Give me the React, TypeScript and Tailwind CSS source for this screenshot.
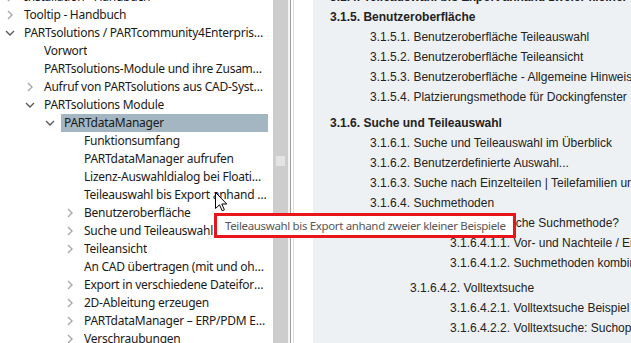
import React from "react";

type TreeRow = {
  label: string;
  level: 0 | 1 | 2 | 3;
  chevron?: "right" | "down";
  selected?: boolean;
};

const TREE: TreeRow[] = [
  { label: "Installation - Handbuch", level: 0, chevron: "right" },
  { label: "Tooltip - Handbuch", level: 0, chevron: "right" },
  { label: "PARTsolutions / PARTcommunity4Enterprise - Handbuch", level: 0, chevron: "down" },
  { label: "Vorwort", level: 1 },
  { label: "PARTsolutions-Module und ihre Zusammenhänge", level: 1 },
  { label: "Aufruf von PARTsolutions aus CAD-Systemen", level: 1, chevron: "right" },
  { label: "PARTsolutions Module", level: 1, chevron: "down" },
  { label: "PARTdataManager", level: 2, chevron: "down", selected: true },
  { label: "Funktionsumfang", level: 3 },
  { label: "PARTdataManager aufrufen", level: 3 },
  { label: "Lizenz-Auswahldialog bei Floating-Lizenzen", level: 3 },
  { label: "Teileauswahl bis Export anhand zweier kleiner Beispiele", level: 3 },
  { label: "Benutzeroberfläche", level: 3, chevron: "right" },
  { label: "Suche und Teileauswahl", level: 3, chevron: "right" },
  { label: "Teileansicht", level: 3, chevron: "right" },
  { label: "An CAD übertragen (mit und ohne Zusatzmodule)", level: 3 },
  { label: "Export in verschiedene Dateiformate", level: 3, chevron: "right" },
  { label: "2D-Ableitung erzeugen", level: 3, chevron: "right" },
  { label: "PARTdataManager – ERP/PDM Einbindung", level: 3, chevron: "right" },
  { label: "Verschraubungen", level: 3, chevron: "right" },
];

const TREE_INDENT = ["pl-[2px]", "pl-[22px]", "pl-[42px]", "pl-[62px]"];

type TocRow = { num: string; title: string; level: 0 | 1 | 2 | 3; bold?: boolean; gap?: string };

const TOC: TocRow[] = [
  { num: "3.1.4.", title: "Teileauswahl bis Export anhand zweier kleiner Beispiele", level: 0, bold: true },
  { num: "3.1.5.", title: "Benutzeroberfläche", level: 0, bold: true },
  { num: "3.1.5.1.", title: "Benutzeroberfläche Teileauswahl", level: 1 },
  { num: "3.1.5.2.", title: "Benutzeroberfläche Teileansicht", level: 1 },
  { num: "3.1.5.3.", title: "Benutzeroberfläche - Allgemeine Hinweise", level: 1 },
  { num: "3.1.5.4.", title: "Platzierungsmethode für Dockingfenster", level: 1 },
  { num: "3.1.6.", title: "Suche und Teileauswahl", level: 0, bold: true, gap: "mt-[6px]" },
  { num: "3.1.6.1.", title: "Suche und Teileauswahl im Überblick", level: 1 },
  { num: "3.1.6.2.", title: "Benutzerdefinierte Auswahl...", level: 1 },
  { num: "3.1.6.3.", title: "Suche nach Einzelteilen | Teilefamilien und Katalogen", level: 1 },
  { num: "3.1.6.4.", title: "Suchmethoden", level: 1 },
  { num: "3.1.6.4.1.", title: "Wann welche Suchmethode?", level: 2 },
  { num: "3.1.6.4.1.1.", title: "Vor- und Nachteile / Einsatzgebiete", level: 3 },
  { num: "3.1.6.4.1.2.", title: "Suchmethoden kombinieren", level: 3 },
  { num: "3.1.6.4.2.", title: "Volltextsuche", level: 2, gap: "mt-[5px]" },
  { num: "3.1.6.4.2.1.", title: "Volltextsuche Beispiel", level: 3 },
  { num: "3.1.6.4.2.2.", title: "Volltextsuche: Suchoptionen", level: 3 },
];

const TOC_INDENT = ["pl-[17px]", "pl-[57px]", "pl-[97px]", "pl-[137px]"];

function Chevron({ dir }: { dir?: "right" | "down" }) {
  return (
    <span className="flex h-full w-[16px] shrink-0 items-center justify-center">
      {dir === "right" && (
        <svg width="6" height="10" viewBox="0 0 6 10">
          <path d="M1 1 L5 5 L1 9" fill="none" stroke="#a8a8a8" strokeWidth="1.4" />
        </svg>
      )}
      {dir === "down" && (
        <svg width="10" height="6" viewBox="0 0 10 6">
          <path d="M1 1 L5 5 L9 1" fill="none" stroke="#5a5a5a" strokeWidth="1.4" />
        </svg>
      )}
    </span>
  );
}

function Cursor() {
  return (
    <svg
      className="pointer-events-none absolute left-[215px] top-[192px]"
      width="13"
      height="20"
      viewBox="0 0 13 20"
    >
      <path
        d="M0.5 0.5 L0.5 16.5 L4.5 12.8 L7.2 18.8 L9.4 17.8 L6.8 12 L11.8 12 Z"
        fill="#ffffff"
        stroke="#000000"
        strokeWidth="1"
        strokeLinejoin="miter"
      />
    </svg>
  );
}

export default function App() {
  return (
    <div className="relative flex h-[343px] w-[631px] overflow-hidden bg-white">
      {/* tree */}
      <div className="h-full w-[273px] shrink-0 overflow-hidden bg-white font-['Noto_Sans',sans-serif] text-[12px] tracking-[-0.25px] text-[#1a1a1a]">
        <div className="mt-[-12px] flex flex-col">
          {TREE.map((row) => (
            <div key={row.label} className={`flex h-[18px] items-center pr-[5px] ${TREE_INDENT[row.level]}`}>
              <Chevron dir={row.chevron} />
              <div
                className={`ml-[3px] flex h-full min-w-0 flex-1 items-center pl-[3px] ${
                  row.selected ? "bg-[#a3b6c2]" : ""
                }`}
              >
                <span className="truncate leading-[18px]">{row.label}</span>
              </div>
            </div>
          ))}
        </div>
      </div>

      {/* scrollbar */}
      <div className="flex h-full w-[15px] shrink-0 flex-col bg-[#cdcdcd]">
        <div className="ml-[3px] mt-[156px] h-[10px] w-[9px] bg-[#e4e4e4]" />
      </div>

      {/* splitter */}
      <div className="flex h-full w-[25px] shrink-0">
        <div className="w-[2px] bg-[#f3f3f3]" />
        <div className="w-[1px] bg-[#9d9d9d]" />
        <div className="w-[2px] bg-white" />
        <div className="w-[1px] bg-[#dedede]" />
        <div className="flex-1 bg-white" />
      </div>

      {/* content */}
      <div className="h-full min-w-0 flex-1 overflow-hidden bg-[#eef1f4] font-['Liberation_Sans',Arial,sans-serif] text-[12px] text-[#222222]">
        <div className="mt-[-13px] flex flex-col">
          {TOC.map((row) => (
            <div
              key={row.num}
              className={`h-[20px] whitespace-nowrap leading-[20px] ${TOC_INDENT[row.level]} ${
                row.bold ? "font-bold" : ""
              } ${row.gap ?? ""}`}
            >
              {row.num} {row.title}
            </div>
          ))}
        </div>
      </div>

      {/* tooltip */}
      <div className="absolute left-[214px] top-[213px] flex h-[25px] w-[302px] items-center border-[3px] border-[#e8151b] bg-white pl-[8px] font-['Noto_Sans',sans-serif] text-[11.5px] tracking-[-0.35px] whitespace-nowrap text-[#575757]">
        Teileauswahl bis Export anhand zweier kleiner Beispiele
      </div>

      <Cursor />
    </div>
  );
}
